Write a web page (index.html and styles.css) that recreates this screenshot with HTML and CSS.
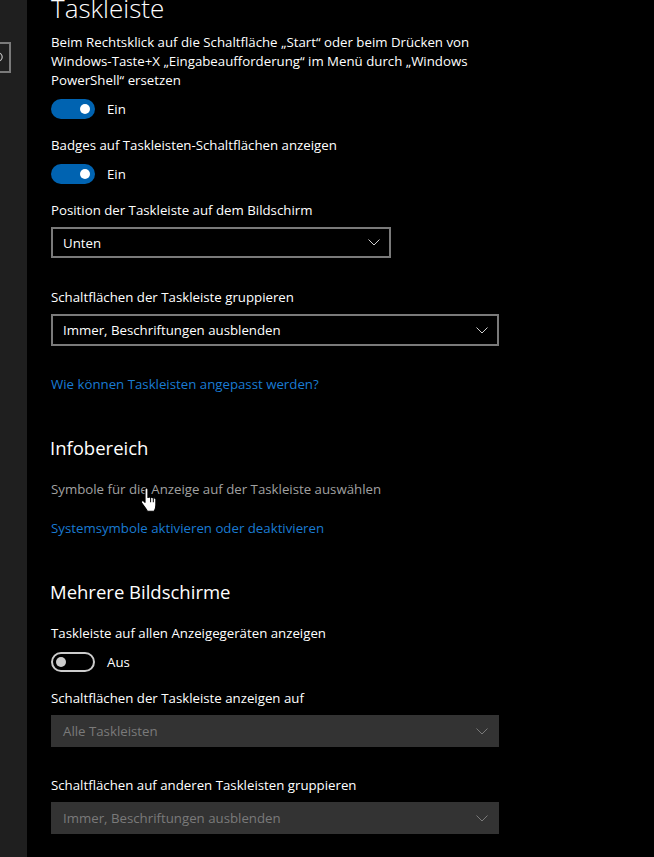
FILE: index.html
```html
<!DOCTYPE html>
<html lang="de">
<head>
<meta charset="utf-8">
<title>Taskleiste</title>
<link rel="stylesheet" href="styles.css">
</head>
<body>
<div class="window">
  <aside class="sidebar">
    <div class="search">
      <svg class="search-icon" width="8" height="14" viewBox="0 0 8 14"><circle cx="-1" cy="6" r="4.2" fill="none" stroke="#cfcfcf" stroke-width="1.1"/></svg>
    </div>
  </aside>
  <main class="content">
    <h1 class="title">Taskleiste</h1>

    <section class="setting first">
      <p class="label multi">Beim Rechtsklick auf die Schaltfläche „Start“ oder beim Drücken von<br>Windows-Taste+X „Eingabeaufforderung“ im Menü durch „Windows<br>PowerShell“ ersetzen</p>
      <div class="toggle-row"><span class="toggle on"><span class="knob"></span></span><span class="state">Ein</span></div>
    </section>

    <section class="setting">
      <p class="label for-toggle">Badges auf Taskleisten-Schaltflächen anzeigen</p>
      <div class="toggle-row"><span class="toggle on"><span class="knob"></span></span><span class="state">Ein</span></div>
    </section>

    <section class="setting">
      <p class="label">Position der Taskleiste auf dem Bildschirm</p>
      <div class="dropdown narrow"><span>Unten</span><svg class="chev" width="12" height="7" viewBox="0 0 12 7"><polyline points="0.5,0.5 6,6 11.5,0.5" fill="none" stroke="#d0d0d0" stroke-width="1"/></svg></div>
    </section>

    <section class="setting wide-gap">
      <p class="label">Schaltflächen der Taskleiste gruppieren</p>
      <div class="dropdown"><span>Immer, Beschriftungen ausblenden</span><svg class="chev" width="12" height="7" viewBox="0 0 12 7"><polyline points="0.5,0.5 6,6 11.5,0.5" fill="none" stroke="#d0d0d0" stroke-width="1"/></svg></div>
    </section>

    <a class="link help" href="#">Wie können Taskleisten angepasst werden?</a>

    <h2 class="heading">Infobereich</h2>
    <div class="hover-wrap">
      <a class="plain-link" href="#">Symbole für die Anzeige auf der Taskleiste auswählen</a>
      <svg class="cursor" width="19" height="26" viewBox="0 0 17 23">
        <path d="M4.5 2.2 Q4.5 0.8 5.8 0.8 Q7.1 0.8 7.1 2.2 L7.1 9.3 Q8.3 8.1 9.5 9.4 Q10.7 8.4 11.9 9.8 Q13.1 9.1 14.2 10.4 L14.2 16 Q14.2 19 12.6 21.6 L6.6 21.6 Q5.6 19.8 4 17.6 L1.4 14 Q0.7 12.5 2 12.2 Q3.2 12 4.5 13.6 Z" fill="#ffffff" stroke="#000000" stroke-width="1" stroke-linejoin="round"/>
        <line x1="9.5" y1="9.6" x2="9.5" y2="13.5" stroke="#000" stroke-width="0.9"/>
        <line x1="11.9" y1="10" x2="11.9" y2="13.5" stroke="#000" stroke-width="0.9"/>
      </svg>
    </div>
    <a class="link sys" href="#">Systemsymbole aktivieren oder deaktivieren</a>

    <h2 class="heading">Mehrere Bildschirme</h2>
    <section class="setting tight">
      <p class="label for-toggle">Taskleiste auf allen Anzeigegeräten anzeigen</p>
      <div class="toggle-row"><span class="toggle off"><span class="knob"></span></span><span class="state">Aus</span></div>
    </section>

    <section class="setting mid-gap">
      <p class="label">Schaltflächen der Taskleiste anzeigen auf</p>
      <div class="dropdown disabled"><span>Alle Taskleisten</span><svg class="chev" width="12" height="7" viewBox="0 0 12 7"><polyline points="0.5,0.5 6,6 11.5,0.5" fill="none" stroke="#7a7a7a" stroke-width="1"/></svg></div>
    </section>

    <section class="setting last-gap">
      <p class="label">Schaltflächen auf anderen Taskleisten gruppieren</p>
      <div class="dropdown disabled"><span>Immer, Beschriftungen ausblenden</span><svg class="chev" width="12" height="7" viewBox="0 0 12 7"><polyline points="0.5,0.5 6,6 11.5,0.5" fill="none" stroke="#7a7a7a" stroke-width="1"/></svg></div>
    </section>
  </main>
</div>
</body>
</html>
```
FILE: styles.css
```css
html, body {
  margin: 0;
  padding: 0;
  background: #000000;
}
body {
  width: 654px;
  height: 857px;
  overflow: hidden;
  font-family: "Open Sans", "Noto Sans", "DejaVu Sans", sans-serif;
  font-size: 13.25px;
  color: #ffffff;
}
.window {
  display: flex;
  height: 857px;
}
.sidebar {
  width: 27px;
  flex-shrink: 0;
  background: #1f1f1f;
  overflow: hidden;
  padding-top: 42px;
  box-sizing: border-box;
}
.search {
  width: 211px;
  height: 31px;
  margin-left: -200px;
  border: 2px solid #7a7a7a;
  box-sizing: border-box;
  display: flex;
  justify-content: flex-end;
  align-items: center;
  padding-right: 2px;
}
.search-icon {
  display: block;
  margin-top: 1px;
}
.content {
  flex: 1;
  padding-left: 24px;
  display: flex;
  flex-direction: column;
  align-items: flex-start;
}
.title {
  margin: -7px 0 0 0;
  font-size: 26px;
  font-weight: 300;
  line-height: 30px;
  height: 30px;
}
.setting {
  display: flex;
  flex-direction: column;
  align-items: flex-start;
  margin-top: 16px;
}
.setting.first {
  margin-top: 10px;
}
.setting.wide-gap {
  margin-top: 29px;
}
.setting.last-gap {
  margin-top: 28px;
}
.setting.tight {
  margin-top: 17px;
}
.setting.mid-gap {
  margin-top: 16px;
}
.label {
  margin: 0 0 8px 0;
  line-height: 20px;
}
.label.for-toggle {
  margin-bottom: 9px;
}
.label.multi {
  line-height: 19px;
  margin-bottom: 9px;
}
.toggle-row {
  display: flex;
  align-items: center;
  gap: 12px;
  height: 20px;
}
.toggle {
  width: 44px;
  height: 20px;
  border-radius: 10px;
  box-sizing: border-box;
  display: flex;
  align-items: center;
}
.toggle .knob {
  width: 10px;
  height: 10px;
  border-radius: 50%;
}
.toggle.on {
  background: #0063b1;
  justify-content: flex-end;
  padding: 0 5px;
}
.toggle.on .knob {
  background: #ffffff;
}
.toggle.off {
  border: 2px solid #cccccc;
  justify-content: flex-start;
  padding: 0 3px;
}
.toggle.off .knob {
  background: #cccccc;
}
.state {
  line-height: 20px;
}
.dropdown {
  width: 448px;
  height: 32px;
  box-sizing: border-box;
  border: 2px solid #7a7a7a;
  display: flex;
  align-items: center;
  justify-content: space-between;
  padding: 0 9px 0 10px;
  margin-top: -1px;
}
.dropdown.narrow {
  width: 340px;
  height: 31px;
}
.dropdown.disabled {
  background: #333333;
  border-color: #333333;
  color: #7a7a7a;
}
.chev {
  display: block;
}
.link {
  color: #1a7bd2;
  text-decoration: none;
  line-height: 20px;
}
.link.help {
  margin-top: 28px;
}
.heading {
  margin: 40px 0 0 -1px;
  font-size: 18.5px;
  font-weight: 400;
  line-height: 28px;
}
.hover-wrap {
  position: relative;
  margin-top: 17px;
}
.plain-link {
  color: #a0a0a0;
  text-decoration: none;
  line-height: 20px;
  display: block;
}
.cursor {
  position: absolute;
  left: 89px;
  top: 8px;
}
.link.sys {
  margin-top: 19px;
}
```
